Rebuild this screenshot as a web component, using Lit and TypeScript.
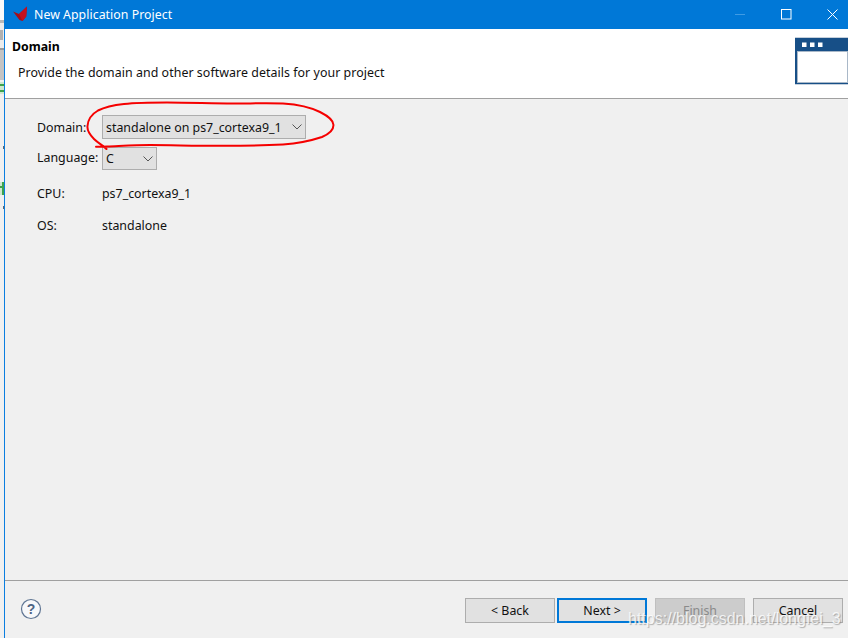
import { LitElement, html, css, svg } from "lit";
import { customElement } from "lit/decorators.js";

@customElement("app-root")
export class AppRoot extends LitElement {
  static styles = css`
    :host {
      display: flex;
      position: relative;
      width: 848px;
      height: 638px;
      overflow: hidden;
      background: #f0f0f0;
      font-family: "Noto Sans", "Open Sans", sans-serif;
      font-size: 12.4px;
      color: #111;
    }
    .sliver { width: 4px; height: 638px; flex: none; display: block; }
    .window {
      flex: 1;
      min-width: 0;
      display: flex;
      flex-direction: column;
      border-left: 1px solid #0a7ee0;
    }
    .titlebar {
      height: 29px;
      flex: none;
      margin-left: -1px;
      background: #0078d7;
      color: #fff;
      display: flex;
      align-items: center;
      padding-left: 8px;
      padding-right: 10px;
      font-size: 12.3px;
    }
    .logo { width: 18px; height: 18px; flex: none; margin-right: 4px; margin-top: 1px; }
    .title { flex: 1; letter-spacing: 0.05px; }
    .controls { display: flex; gap: 35px; align-items: center; }
    .controls svg { width: 11px; height: 11px; display: block; }
    .header {
      height: 69px;
      flex: none;
      background: #fff;
      border-bottom: 1px solid #a0a0a0;
      display: flex;
      justify-content: space-between;
      box-sizing: content-box;
    }
    .head-text { padding: 9px 0 0 7px; }
    .head-title { font-weight: 700; font-size: 12.3px; line-height: 18px; color: #000; }
    .head-desc { margin: 8px 0 0 6px; line-height: 17px; letter-spacing: 0.05px; }
    .banner { width: 53px; height: 48px; margin-top: 8px; display: block; flex: none; }
    .content { flex: 1; min-height: 0; padding: 16px 0 0 32px; }
    .form {
      display: grid;
      grid-template-columns: 65px max-content;
      justify-items: start;
      align-items: center;
    }
    .combo {
      height: 24px;
      box-sizing: border-box;
      border: 1px solid #adadad;
      background: #e1e1e1;
      display: flex;
      align-items: center;
      padding-left: 3px;
    }
    .combo svg { width: 10px; height: 6px; flex: none; }
    .domain { width: 204px; justify-content: space-between; padding-right: 3px; }
    .language { width: 55px; justify-content: space-between; padding-right: 3px; margin-top: 8px; height: 23px; }
    .lang-label { margin-top: 6px; }
    .info { line-height: 17px; }
    .info.cpu { margin-top: 15px; }
    .info.os { margin-top: 15px; }
    .footer {
      height: 58px;
      box-sizing: border-box;
      flex: none;
      border-top: 1px solid #a0a0a0;
      display: flex;
      align-items: flex-start;
      padding: 17px 5px 0 15px;
    }
    .help { width: 22px; height: 22px; display: block; flex: none; }
    .buttons { margin-left: auto; display: flex; }
    .btn {
      width: 90px;
      height: 25px;
      box-sizing: border-box;
      border: 1px solid #adadad;
      background: #e1e1e1;
      display: flex;
      align-items: center;
      justify-content: center;
    }
    .btn.next { border: 2px solid #0078d7; margin-left: 2px; }
    .btn.finish { background: #cccccc; color: #8a8a8a; border-color: #bfbfbf; margin-left: 8px; }
    .btn.cancel { margin-left: 8px; }
    .ink { position: absolute; left: 0; top: 0; width: 848px; height: 638px; pointer-events: none; }
    .watermark {
      position: absolute;
      left: 628px;
      top: 607px;
      font-family: "Liberation Sans", Arial, sans-serif;
      font-size: 16px;
      line-height: 24px;
      color: rgba(255, 255, 255, 0.8);
      text-shadow: 1px 1px 1px rgba(120, 120, 120, 0.55);
      white-space: nowrap;
    }
  `;

  private chevron() {
    return html`<svg viewBox="0 0 10 6"><path d="M0.5 0.5 L5 5 L9.5 0.5" fill="none" stroke="#555" stroke-width="1"/></svg>`;
  }

  render() {
    return html`
      <svg class="sliver" viewBox="0 0 4 638">
        <rect width="4" height="638" fill="#f0f0f0"/>
        <rect y="0" width="4" height="20" fill="#fafafa"/>
        <rect y="20" width="4" height="3" fill="#b8b8b8"/>
        <rect y="23" width="4" height="25" fill="#ececec"/>
        <rect x="0" y="30" width="3" height="10" fill="#8a8a8a" opacity="0.6"/>
        <rect y="48" width="4" height="2" fill="#9a9a9a"/>
        <rect y="50" width="4" height="30" fill="#c4c4c4"/>
        <rect y="82" width="4" height="12" fill="#cfe8cf"/>
        <rect x="0" y="84" width="4" height="2" fill="#3fa34d"/>
        <rect x="0" y="90" width="4" height="2" fill="#3fa34d"/>
        <rect x="3" y="146" width="1" height="3" fill="#5c6670"/>
        <rect y="182" width="4" height="13" fill="#cfe8cf"/>
        <rect x="0" y="186" width="4" height="2" fill="#3fa34d"/>
        <rect x="2" y="182" width="2" height="13" fill="#3fa34d"/>
        <rect x="3" y="206" width="1" height="3" fill="#5c6670"/>
      </svg>
      <div class="window">
        <div class="titlebar">
          <svg class="logo" viewBox="0 0 18 18">
            <path d="M1 5.5 L7 8 L15 0.5 L14.2 10.5 L10.5 15 L7.5 14 Z" fill="#a50e1a"/>
            <path d="M7 8 L15 0.5 L14.2 10.5 L10.5 15 Z" fill="#c4101f"/>
          </svg>
          <span class="title">New Application Project</span>
          <span class="controls">
            <svg viewBox="0 0 11 11"><path d="M0 5.5 H10" stroke="#3f9be4" stroke-width="1"/></svg>
            <svg viewBox="0 0 11 11"><rect x="0.5" y="0.5" width="9.5" height="9.5" fill="none" stroke="#fff" stroke-width="1"/></svg>
            <svg viewBox="0 0 11 11"><path d="M0.5 0.5 L10.5 10.5 M10.5 0.5 L0.5 10.5" stroke="#fff" stroke-width="1"/></svg>
          </span>
        </div>
        <div class="header">
          <div class="head-text">
            <div class="head-title">Domain</div>
            <div class="head-desc">Provide the domain and other software details for your project</div>
          </div>
          <svg class="banner" viewBox="0 0 53 48">
            <rect width="53" height="48" fill="#c5d0dc"/>
            <rect x="0" y="1" width="53" height="46" fill="#174f87"/>
            <rect x="2.5" y="14.5" width="50" height="31" fill="#fff" stroke="#a9b8c8" stroke-width="1"/>
            <rect x="7" y="5.5" width="4.5" height="4.5" fill="#fff"/>
            <rect x="15" y="5.5" width="4.5" height="4.5" fill="#fff"/>
            <rect x="23" y="5.5" width="4.5" height="4.5" fill="#fff"/>
          </svg>
        </div>
        <div class="content">
          <div class="form">
            <span>Domain:</span>
            <div class="combo domain"><span>standalone on ps7_cortexa9_1</span>${this.chevron()}</div>
            <span class="lang-label">Language:</span>
            <div class="combo language"><span>C</span>${this.chevron()}</div>
            <span class="info cpu">CPU:</span>
            <span class="info cpu">ps7_cortexa9_1</span>
            <span class="info os">OS:</span>
            <span class="info os">standalone</span>
          </div>
        </div>
        <div class="footer">
          <svg class="help" viewBox="0 0 22 22">
            <circle cx="11" cy="11" r="9.5" fill="#f7f8fa" stroke="#5f7593" stroke-width="1.2"/>
            <text x="11" y="16" text-anchor="middle" font-family="'Liberation Sans', sans-serif" font-size="14" font-weight="700" fill="#4d6484">?</text>
          </svg>
          <div class="buttons">
            <div class="btn">&lt; Back</div>
            <div class="btn next">Next &gt;</div>
            <div class="btn finish">Finish</div>
            <div class="btn cancel">Cancel</div>
          </div>
        </div>
      </div>
      <svg class="ink" viewBox="0 0 848 638">
        ${svg`<path d="M106.5 149 C104 146 98 143 94 139 C89 134 87 130 87.5 126 C88 119 92 114 98 110.5 C106 106.5 115 105 124 104 C138 102.5 152 102.5 167 102.5 C190 102.5 212 103.5 233 103.5 C250 103.5 268 103 283 103.5 C298 104.5 311 107.5 320 112 C328 116 333.5 120.5 333.5 125 C333.5 130 329 134 322 137 C310 141 297 143.5 283 144.5 C256 146 228 146 200 145.7 C183 145.5 166 145 150 145 C135 145 120 146 107 146.5 C103 146.7 99 146.7 96 146.7" fill="none" stroke="#f50000" stroke-width="2" stroke-linecap="round"/>`}
      </svg>
      <div class="watermark">https://blog.csdn.net/longfei_3</div>
    `;
  }
}
